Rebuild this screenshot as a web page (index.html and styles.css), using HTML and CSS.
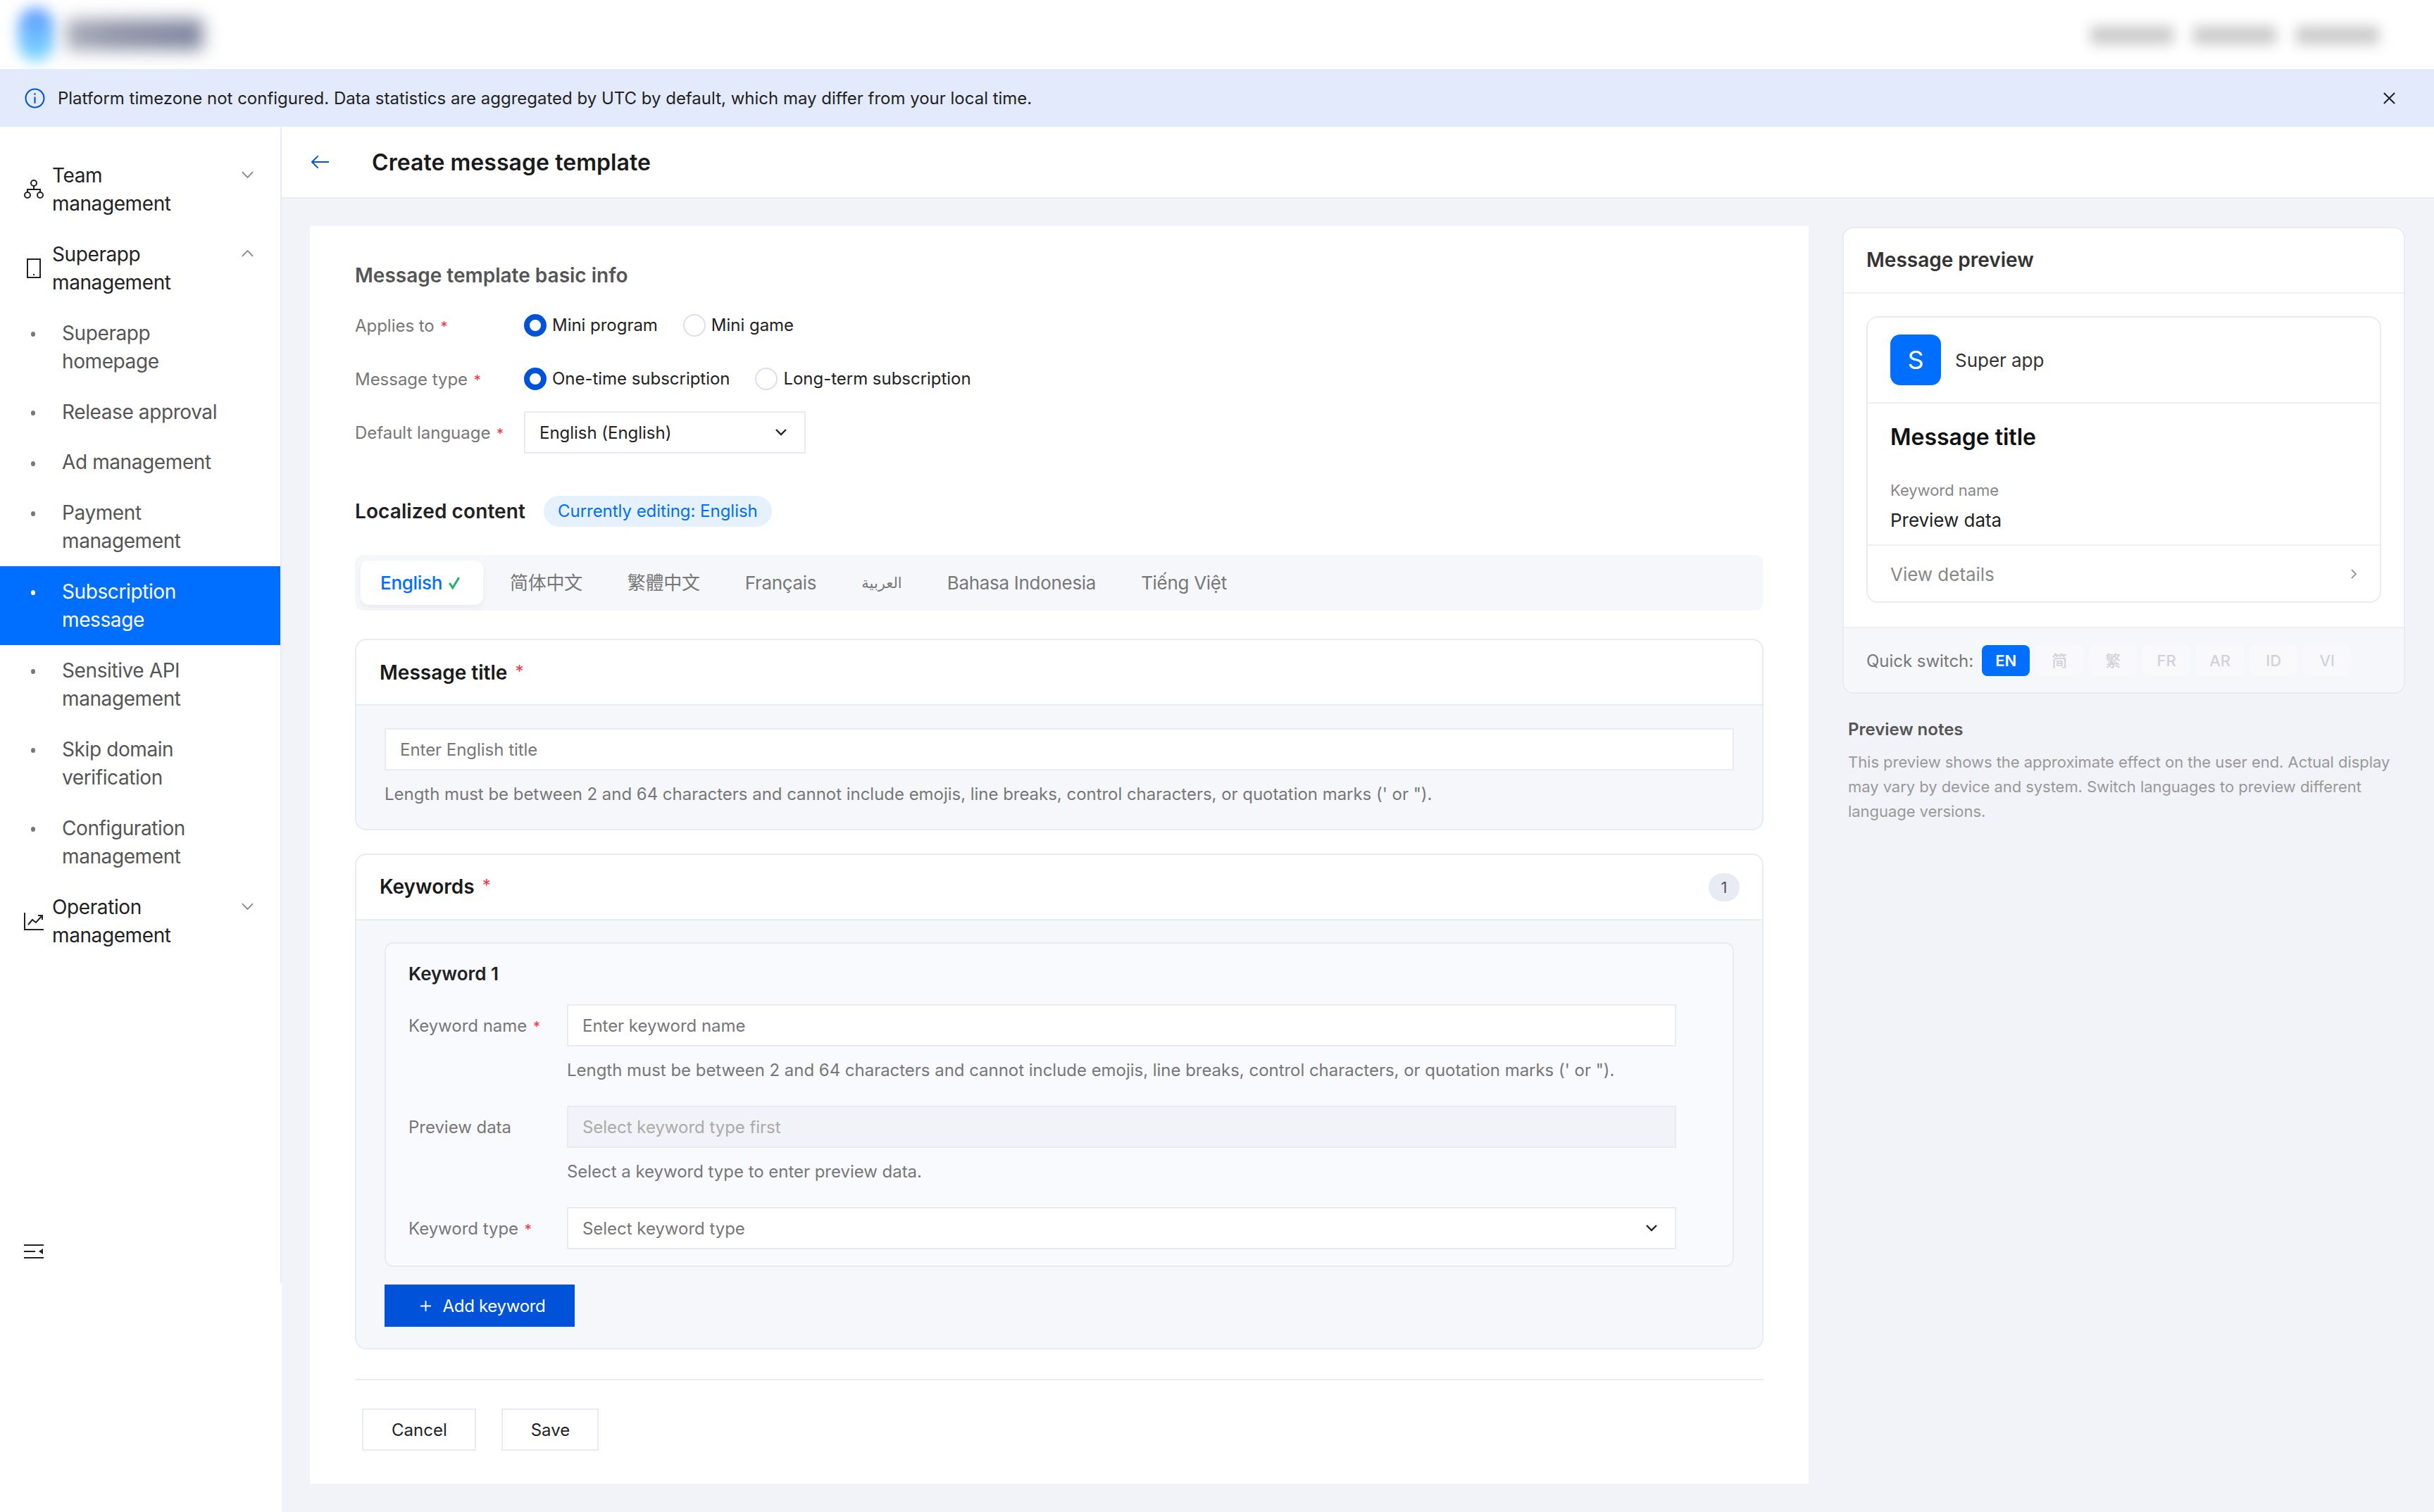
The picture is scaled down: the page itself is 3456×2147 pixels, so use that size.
FILE: index.html
```html
<!DOCTYPE html>
<html lang="en">
  <head>
    <meta charset="UTF-8" />
    <title>Create message template</title>
    <link rel="stylesheet" href="styles.css">
  </head>
  <body>
    <div class="top-bar">
      <div class="logo">
        <span class="logo-mark"></span>
        <span class="logo-word"></span>
      </div>
      <div class="account">
        <span class="account-bit"></span>
        <span class="account-bit"></span>
        <span class="account-bit"></span>
      </div>
    </div>

    <div class="notice">
      <svg class="notice-icon" viewBox="0 0 28 28" fill="none" stroke="#0052d9" stroke-width="2">
        <circle cx="14" cy="14" r="12.5" />
        <path d="M14 12v9M14 7v2.5" />
      </svg>
      <span class="notice-text">Platform timezone not configured. Data statistics are aggregated by UTC by default, which may differ from your local time.</span>
      <svg class="notice-close" viewBox="0 0 20 20" fill="none" stroke="#222" stroke-width="2.2">
        <path d="M2 2l16 16M18 2L2 18" />
      </svg>
    </div>

    <div class="layout">
      <aside class="sidebar">
        <nav class="nav">
          <a class="nav-item parent">
            <svg class="nav-icon" viewBox="0 0 28 28" fill="none" stroke="#222" stroke-width="2">
              <circle cx="14" cy="5" r="4" />
              <circle cx="5" cy="22" r="4" />
              <circle cx="23" cy="22" r="4" />
              <path d="M14 9v5M5 18v-4h18v4" />
            </svg>
            <span>Team management</span>
            <svg class="nav-arrow" viewBox="0 0 20 12" fill="none" stroke="#888" stroke-width="2"><path d="M2 2l8 8 8-8" /></svg>
          </a>
          <a class="nav-item parent">
            <svg class="nav-icon" viewBox="0 0 28 28" fill="none" stroke="#222" stroke-width="2">
              <rect x="5" y="1" width="18" height="26" />
              <path d="M14 22v2" />
            </svg>
            <span>Superapp management</span>
            <svg class="nav-arrow" viewBox="0 0 20 12" fill="none" stroke="#888" stroke-width="2"><path d="M2 10l8-8 8 8" /></svg>
          </a>
          <a class="nav-item sub"><i class="dot"></i><span>Superapp homepage</span></a>
          <a class="nav-item sub short"><i class="dot"></i><span>Release approval</span></a>
          <a class="nav-item sub short"><i class="dot"></i><span>Ad management</span></a>
          <a class="nav-item sub"><i class="dot"></i><span>Payment management</span></a>
          <a class="nav-item sub active"><i class="dot"></i><span>Subscription message</span></a>
          <a class="nav-item sub"><i class="dot"></i><span>Sensitive API management</span></a>
          <a class="nav-item sub"><i class="dot"></i><span>Skip domain verification</span></a>
          <a class="nav-item sub"><i class="dot"></i><span>Configuration management</span></a>
          <a class="nav-item parent">
            <svg class="nav-icon" viewBox="0 0 28 28" fill="none" stroke="#222" stroke-width="2">
              <path d="M1 2v24h27" />
              <path d="M6 19l6-7 5 4 8-9M20 6h6v6" />
            </svg>
            <span>Operation management</span>
            <svg class="nav-arrow" viewBox="0 0 20 12" fill="none" stroke="#888" stroke-width="2"><path d="M2 2l8 8 8-8" /></svg>
          </a>
          <div class="collapse">
            <svg class="nav-icon" viewBox="0 0 28 22" fill="#222" stroke="#222" stroke-width="2">
              <path d="M0 2h28M0 11h16M0 20h28" />
              <path d="M27 7v8l-6-4z" stroke="none" />
            </svg>
          </div>
        </nav>
      </aside>

      <main class="main">
        <div class="title-bar">
          <svg class="back" viewBox="0 0 28 22" fill="none" stroke="#0052d9" stroke-width="2"><path d="M27 11H2M11 2l-9 9 9 9" /></svg>
          <h1>Create message template</h1>
        </div>

        <div class="content">
          <section class="form-card">
            <h2 class="section-title">Message template basic info</h2>

            <div class="form-row">
              <label class="form-label">Applies to <b class="req">*</b></label>
              <div class="radio-group">
                <span class="radio on"></span><span class="radio-text">Mini program</span>
                <span class="radio"></span><span class="radio-text">Mini game</span>
              </div>
            </div>
            <div class="form-row">
              <label class="form-label">Message type <b class="req">*</b></label>
              <div class="radio-group">
                <span class="radio on"></span><span class="radio-text">One-time subscription</span>
                <span class="radio"></span><span class="radio-text">Long-term subscription</span>
              </div>
            </div>
            <div class="form-row">
              <label class="form-label">Default language <b class="req">*</b></label>
              <div class="input lang-select">
                <span class="value">English (English)</span>
                <svg class="select-arrow" viewBox="0 0 18 12" fill="none" stroke="#222" stroke-width="2.4"><path d="M2 2l7 7 7-7" /></svg>
              </div>
            </div>

            <div class="localized-head">
              <h3>Localized content</h3>
              <span class="pill">Currently editing: English</span>
            </div>

            <div class="tabs">
              <span class="tab selected">English
                <svg class="tick" viewBox="0 0 16 16" fill="none" stroke="#1db362" stroke-width="2.6"><path d="M2 8l4 6 8-13" /></svg>
              </span>
              <span class="tab">简体中文</span>
              <span class="tab">繁體中文</span>
              <span class="tab">Français</span>
              <span class="tab ar">العربية</span>
              <span class="tab">Bahasa Indonesia</span>
              <span class="tab">Tiếng Việt</span>
            </div>

            <div class="box title-box">
              <div class="box-head"><h4>Message title <b class="req up">*</b></h4></div>
              <div class="box-body">
                <div class="input"><span class="placeholder">Enter English title</span></div>
                <p class="hint">Length must be between 2 and 64 characters and cannot include emojis, line breaks, control characters, or quotation marks (' or ").</p>
              </div>
            </div>

            <div class="box keywords-box">
              <div class="box-head">
                <h4>Keywords <b class="req up">*</b></h4>
                <span class="count">1</span>
              </div>
              <div class="box-body">
                <div class="keyword">
                  <h5>Keyword 1</h5>
                  <div class="field">
                    <label class="form-label">Keyword name <b class="req">*</b></label>
                    <div class="input"><span class="placeholder">Enter keyword name</span></div>
                  </div>
                  <p class="hint field-hint">Length must be between 2 and 64 characters and cannot include emojis, line breaks, control characters, or quotation marks (' or ").</p>
                  <div class="field">
                    <label class="form-label">Preview data</label>
                    <div class="input disabled"><span class="placeholder">Select keyword type first</span></div>
                  </div>
                  <p class="hint field-hint">Select a keyword type to enter preview data.</p>
                  <div class="field">
                    <label class="form-label">Keyword type <b class="req">*</b></label>
                    <div class="input">
                      <span class="placeholder">Select keyword type</span>
                      <svg class="select-arrow" viewBox="0 0 18 12" fill="none" stroke="#222" stroke-width="2.4"><path d="M2 2l7 7 7-7" /></svg>
                    </div>
                  </div>
                </div>
                <button class="btn-add">
                  <svg viewBox="0 0 18 18" fill="none" stroke="#fff" stroke-width="2"><path d="M9 1v16M1 9h16" /></svg>
                  Add keyword
                </button>
              </div>
            </div>

            <div class="actions">
              <button class="btn">Cancel</button>
              <button class="btn">Save</button>
            </div>
          </section>

          <aside class="preview-col">
            <div class="preview-card">
              <div class="preview-head">Message preview</div>
              <div class="preview-body">
                <div class="phone-card">
                  <div class="app-row">
                    <span class="app-icon">S</span>
                    <span class="app-name">Super app</span>
                  </div>
                  <div class="msg">
                    <div class="msg-title">Message title</div>
                    <div class="msg-key">Keyword name</div>
                    <div class="msg-val">Preview data</div>
                  </div>
                  <div class="details">
                    <span>View details</span>
                    <svg viewBox="0 0 10 16" fill="none" stroke="#999" stroke-width="2"><path d="M2 2l6 6-6 6" /></svg>
                  </div>
                </div>
              </div>
              <div class="switcher">
                <span class="switch-label">Quick switch:</span>
                <span class="chip on">EN</span>
                <span class="chip">简</span>
                <span class="chip">繁</span>
                <span class="chip">FR</span>
                <span class="chip">AR</span>
                <span class="chip">ID</span>
                <span class="chip">VI</span>
              </div>
            </div>
            <div class="notes">
              <h4>Preview notes</h4>
              <p>This preview shows the approximate effect on the user end. Actual display may vary by device and system. Switch languages to preview different language versions.</p>
            </div>
          </aside>
        </div>
      </main>
    </div>
  </body>
</html>
```

FILE: styles.css
```css
* {
  box-sizing: border-box;
}
html,
body {
  margin: 0;
  height: 2147px;
  overflow: hidden;
}
body {
  font-family: Inter, "Noto Sans CJK SC", "DejaVu Sans", sans-serif;
  font-size: 24px;
  letter-spacing: -0.03px;
  color: #222;
  background: #fff;
}
h1,
h2,
h3,
h4,
h5,
p {
  margin: 0;
}

/* top bar */
.top-bar {
  height: 98px;
  display: flex;
  justify-content: space-between;
  align-items: center;
  overflow: hidden;
}
.logo {
  display: flex;
  align-items: center;
  gap: 18px;
  padding-left: 26px;
}
.logo-mark {
  width: 50px;
  height: 76px;
  border-radius: 25px;
  background: linear-gradient(#5a96ff, #7fdcff);
  filter: blur(10px);
}
.logo-word {
  width: 194px;
  height: 44px;
  background: linear-gradient(90deg, #a9adba, #9196a8 35%, #7f85a0);
  filter: blur(12px);
}
.account {
  display: flex;
  gap: 28px;
  padding-right: 78px;
  padding-top: 2px;
}
.account-bit {
  width: 118px;
  height: 26px;
  background: #cbcbcb;
  filter: blur(9px);
}

/* notice */
.notice {
  height: 82px;
  background: #e2eafc;
  display: flex;
  align-items: center;
  padding: 0 54px 0 35px;
}
.notice-icon {
  width: 29px;
  height: 29px;
  margin-right: 18px;
}
.notice-text {
  flex: 1;
  letter-spacing: -0.01px;
}
.notice-close {
  width: 19px;
  height: 19px;
}

/* sidebar */
.layout {
  display: flex;
  height: 1967px;
}
.sidebar {
  width: 400px;
  flex: none;
  background: #fff;
}
.nav {
  height: 1642px;
  border-right: 2px solid #e8ebf3;
  padding-top: 33px;
  display: flex;
  flex-direction: column;
}
.nav-item {
  display: flex;
  align-items: center;
  height: 112px;
  font-size: 28px;
  line-height: 40px;
  letter-spacing: -0.4px;
  position: relative;
}
.nav-item span {
  width: 240px;
}
.parent {
  padding-left: 34px;
  color: #222;
}
.parent .nav-icon {
  margin-right: 12px;
}
.nav-icon {
  width: 28px;
  height: 28px;
  flex: none;
}
.nav-arrow {
  position: absolute;
  left: 342px;
  top: 29px;
  width: 19px;
  height: 12px;
}
.sub {
  padding-left: 88px;
  color: #555;
}
.short {
  height: 71.5px;
}
.dot {
  position: absolute;
  left: 44px;
  top: 34px;
  width: 6px;
  height: 7px;
  border-radius: 50%;
  background: #777;
}
.active {
  background: #006eff;
  color: #fff;
}
.active .dot {
  background: #fff;
}
.collapse {
  margin-top: auto;
  padding: 0 0 34px 34px;
  line-height: 0;
}
.collapse .nav-icon {
  height: 22px;
}

/* main area */
.main {
  flex: 1;
  background: #f2f3f8;
  min-width: 0;
}
.title-bar {
  height: 102px;
  background: #fff;
  border-bottom: 2px solid #e8ebf3;
  display: flex;
  align-items: center;
  padding-left: 41px;
}
.back {
  width: 27px;
  height: 22px;
  margin-right: 60px;
}
h1 {
  font-size: 32px;
  font-weight: 600;
  letter-spacing: 0.05px;
  color: #1a1a1a;
}
.content {
  display: flex;
  gap: 48px;
  padding: 39px 41px 0 40px;
}

/* form */
.form-card {
  width: 2128px;
  height: 1786px;
  flex: none;
  background: #fff;
  padding: 50px 64px 0;
}
.section-title {
  font-size: 28px;
  line-height: 40px;
  font-weight: 600;
  letter-spacing: 0;
  color: #555;
  margin-bottom: 21px;
}
.form-row {
  display: flex;
  align-items: center;
  height: 60px;
  margin-bottom: 16px;
}
.form-row .form-label {
  width: 240px;
  flex: none;
}
.form-label {
  color: #777;
}
.req {
  color: #f5333f;
  font-weight: 400;
  font-size: 20px;
  margin-left: 2px;
}
.up {
  position: relative;
  top: -3px;
  font-size: 24px;
  margin-left: 4px;
}
.radio-group {
  display: flex;
  align-items: center;
}
.radio {
  width: 32px;
  height: 32px;
  border-radius: 50%;
  border: 2px solid #dcdfe8;
  background: #fff;
  flex: none;
}
.radio.on {
  border: 8px solid #0052d9;
}
.radio-text {
  margin: 0 36px 2px 8px;
}
.input {
  display: flex;
  align-items: center;
  justify-content: space-between;
  height: 60px;
  background: #fff;
  border: 2px solid #e8ebf3;
  padding: 0 24px 0 20px;
}
.lang-select {
  width: 400px;
}
.placeholder {
  color: #777;
}
.select-arrow {
  width: 18px;
  height: 12px;
}
.disabled {
  background: #f2f3f8;
}
.disabled .placeholder {
  color: #aaa;
}
.localized-head {
  display: flex;
  align-items: center;
  gap: 26px;
  height: 44px;
  margin-top: 60px;
}
h3 {
  font-size: 28px;
  font-weight: 600;
  letter-spacing: 0.1px;
}
.pill {
  height: 44px;
  line-height: 44px;
  padding: 0 20px;
  border-radius: 22px;
  background: #e6f1fe;
  color: #006eff;
}
.tabs {
  display: flex;
  align-items: center;
  height: 79px;
  margin-top: 40px;
  padding: 0 8px;
  background: #f6f7fb;
  border-radius: 12px;
  font-size: 26px;
  letter-spacing: -0.3px;
  color: #777;
}
.tab {
  padding: 0 32px;
  height: 63px;
  line-height: 63px;
}
.tab.ar {
  font-size: 21px;
}
.selected {
  display: flex;
  align-items: center;
  gap: 8px;
  width: 174px;
  margin-right: 6px;
  background: #fff;
  border-radius: 12px;
  color: #006eff;
  font-weight: 500;
  box-shadow: 0 4px 10px rgba(0, 0, 0, 0.05);
  padding: 0 28px;
}
.tick {
  width: 18px;
  height: 18px;
  flex: none;
}
.box {
  margin-top: 40px;
  border: 2px solid #e8ebf3;
  border-radius: 16px;
  background: #f6f7fb;
  overflow: hidden;
}
.title-box {
  height: 272px;
}
.keywords-box {
  height: 704px;
  margin-top: 33px;
}
.keywords-box .box-body {
  padding-top: 31px;
}
.keywords-box h4 {
  margin-bottom: 2px;
}
.box-head {
  display: flex;
  align-items: center;
  justify-content: space-between;
  height: 93px;
  background: #fff;
  border-bottom: 2px solid #e8ebf3;
  padding: 0 32px 0 33px;
}
h4 {
  font-size: 28px;
  font-weight: 600;
  letter-spacing: 0;
  color: #1a1a1a;
}
.count {
  width: 44px;
  height: 40px;
  line-height: 40px;
  text-align: center;
  border-radius: 20px;
  background: #e7ebf3;
  font-size: 22px;
  color: #555;
}
.box-body {
  padding: 32px 40px;
}
.hint {
  color: #777;
  line-height: 36px;
  margin-top: 16px;
}
.keyword {
  height: 461px;
  background: #f9fafd;
  border: 2px solid #e8ebf3;
  border-radius: 12px;
  padding: 23px 80px 0 32px;
}
h5 {
  font-size: 26px;
  line-height: 40px;
  font-weight: 600;
  margin-bottom: 23px;
}
.field {
  display: flex;
  align-items: center;
}
.field .form-label {
  width: 225px;
  flex: none;
}
.field .input {
  flex: 1;
}
.field-hint {
  margin: 16px 0 32px 225px;
}
.btn-add {
  display: flex;
  align-items: center;
  justify-content: center;
  gap: 16px;
  width: 270px;
  height: 60px;
  margin-top: 25px;
  background: #0052d9;
  color: #fff;
  border: 0;
  font: inherit;
  letter-spacing: -0.3px;
}
.btn-add svg {
  width: 17px;
  height: 17px;
  margin-left: 8px;
}
.actions {
  display: flex;
  gap: 36px;
  margin-top: 42px;
  padding: 40px 10px 0;
  border-top: 2px solid #e8ebf3;
}
.btn {
  height: 60px;
  padding: 0 39px 0 40px;
  background: #fff;
  border: 2px solid #e8ebf3;
  font: inherit;
  color: #222;
}

/* preview */
.preview-col {
  width: 799px;
  flex: none;
}
.preview-card {
  height: 663px;
  background: #fff;
  border: 2px solid #e8ebf3;
  border-radius: 16px;
  overflow: hidden;
  margin-top: 1px;
}
.preview-head {
  height: 93px;
  border-bottom: 2px solid #eef0f5;
  padding-left: 32px;
  line-height: 90px;
  font-size: 28px;
  font-weight: 600;
  letter-spacing: 0;
  color: #333;
}
.preview-body {
  height: 473px;
  padding: 32px 32px 0;
}
.phone-card {
  height: 407px;
  border: 2px solid #e8ebf3;
  border-radius: 16px;
  overflow: hidden;
}
.app-row {
  display: flex;
  align-items: center;
  gap: 20px;
  height: 122px;
  padding: 0 32px 0 32px;
  border-bottom: 2px solid #eef0f5;
  font-size: 26px;
  color: #333;
}
.app-icon {
  width: 72px;
  height: 72px;
  border-radius: 14px;
  background: #006eff;
  color: #fff;
  font-size: 36px;
  line-height: 72px;
  text-align: center;
}
.msg {
  height: 202px;
  padding: 26px 32px 0;
  border-bottom: 2px solid #eef0f5;
}
.msg-title {
  font-size: 32px;
  line-height: 44px;
  font-weight: 600;
  color: #111;
  margin-bottom: 37px;
}
.msg-key {
  font-size: 22px;
  line-height: 32px;
  color: #888;
  margin-bottom: 9px;
}
.msg-val {
  font-size: 26px;
  line-height: 36px;
  color: #222;
}
.details {
  display: flex;
  align-items: center;
  justify-content: space-between;
  height: 80px;
  padding: 0 32px;
  font-size: 26px;
  color: #888;
}
.details svg {
  width: 10px;
  height: 16px;
}
.switcher {
  height: 94px;
  background: #f6f7fb;
  border-top: 2px solid #eef0f5;
  display: flex;
  align-items: center;
  gap: 8px;
  padding-left: 32px;
}
.switch-label {
  color: #777;
  margin-right: 4px;
}
.chip {
  width: 68px;
  height: 44px;
  line-height: 44px;
  text-align: center;
  border-radius: 8px;
  background: #f9f9fb;
  color: #d2d2d6;
  font-size: 22px;
  font-weight: 500;
}
.chip.on {
  background: #006eff;
  color: #fff;
  font-weight: 600;
}
.notes {
  padding: 33px 0 0 8px;
}
.notes h4 {
  font-size: 24px;
  line-height: 36px;
  color: #555;
  margin-bottom: 11px;
}
.notes p {
  font-size: 22px;
  line-height: 35px;
  letter-spacing: -0.05px;
  color: #999;
}
```
